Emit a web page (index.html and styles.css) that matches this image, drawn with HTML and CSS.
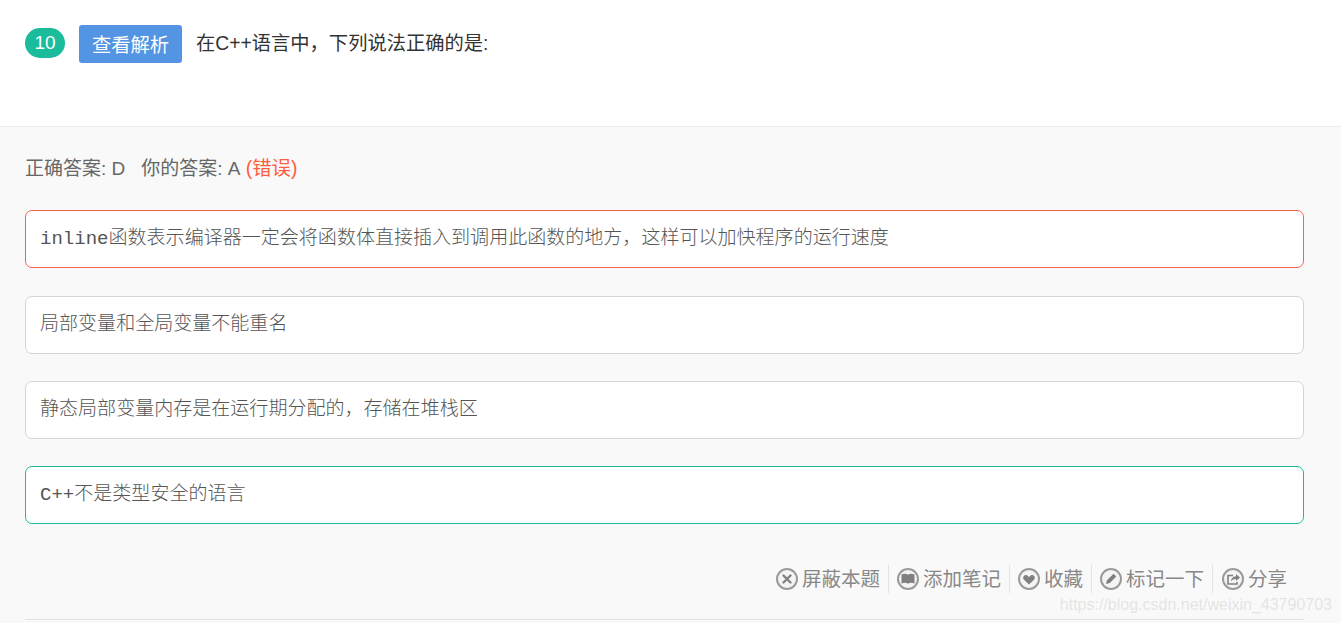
FILE: index.html
```html
<!DOCTYPE html>
<html lang="zh-CN">
<head>
<meta charset="utf-8">
<title>题目解析</title>
<link rel="stylesheet" href="styles.css">
</head>
<body>
<header class="question">
  <span class="num">10</span>
  <a class="analysis-btn">查看解析</a>
  <p class="title">在C++语言中，下列说法正确的是:</p>
</header>
<main class="answer-area">
  <p class="result">正确答案: D<span class="yours">你的答案: A</span> <span class="wrong">(错误)</span></p>
  <ul class="options">
    <li class="option option-wrong">inline函数表示编译器一定会将函数体直接插入到调用此函数的地方，这样可以加快程序的运行速度</li>
    <li class="option">局部变量和全局变量不能重名</li>
    <li class="option">静态局部变量内存是在运行期分配的，存储在堆栈区</li>
    <li class="option option-right">C++不是类型安全的语言</li>
  </ul>
  <div class="actions">
    <a class="action">
      <svg class="icon" viewBox="0 0 22 22"><circle cx="11" cy="11" r="10" class="ring"/><path d="M7.500 7.500l7 7M14.500 7.500l-7 7" class="x"/></svg>屏蔽本题</a>
    <a class="action">
      <svg class="icon" viewBox="0 0 22 22"><circle cx="11" cy="11" r="10" class="ring"/><path d="M4.500 6.500c2.500-1 5-1 6.500.3 1.500-1.300 4-1.300 6.500-.3v9c-2.500-1-5-1-6.500.2-1.500-1.200-4-1.200-6.500-.2z" class="solid"/></svg>添加笔记</a>
    <a class="action">
      <svg class="icon" viewBox="0 0 22 22"><circle cx="11" cy="11" r="10" class="ring"/><path d="M11 16.500l-5-4.700c-2.300-2.500.9-6 3.300-4.200L11 9l1.700-1.400c2.400-1.800 5.600 1.700 3.300 4.200z" class="solid"/></svg>收藏</a>
    <a class="action">
      <svg class="icon" viewBox="0 0 22 22"><circle cx="11" cy="11" r="10" class="ring"/><path d="M6 16l1-3.800 6.500-6.500 2.800 2.800-6.500 6.500z" class="solid"/></svg>标记一下</a>
    <a class="action">
      <svg class="icon" viewBox="0 0 22 22"><circle cx="11" cy="11" r="10" class="ring"/><path d="M14 6l4 3.500-4 3.500v-2c-2.500 0-4 .8-5 2.500 0-3 1.800-5 5-5.300z" class="solid"/><path d="M11 7.500H6v8.500h9v-2" class="line"/></svg>分享</a>
  </div>
  <div class="divider"></div>
</main>
<span class="watermark">https://blog.csdn.net/weixin_43790703</span>
</body>
</html>
```
FILE: styles.css
```css
* { box-sizing: border-box; }
html, body { margin: 0; height: 623px; overflow: hidden; }
body {
  position: relative;
  font-family: "Liberation Sans", "Noto Sans CJK SC", sans-serif;
  font-size: 19px;
  color: #666;
  background: #f9f9f9;
}
.question {
  height: 127px;
  background: #fff;
  border-bottom: 1px solid #ececec;
  padding: 25px 25px 0;
  display: flex;
  align-items: flex-start;
}
.num {
  width: 40px;
  height: 30px;
  margin-top: 3px;
  border-radius: 15px;
  background: #1abc9c;
  color: #fff;
  font-size: 19px;
  line-height: 30px;
  text-align: center;
}
.analysis-btn {
  width: 103px;
  height: 38px;
  margin-left: 14px;
  padding-top: 2px;
  border-radius: 3px;
  background: #5495e3;
  color: #fff;
  font-size: 19.300px;
  line-height: 38px;
  text-align: center;
}
.title {
  margin: 0 0 0 14px;
  color: #333;
  font-size: 19.300px;
  line-height: 37px;
}
.answer-area { padding: 27px 37px 0 25px; }
.result {
  margin: 0;
  height: 30px;
  line-height: 28px;
  color: #666;
}
.yours { margin-left: 16px; }
.wrong { margin-left: 1px; color: #ff5c41; font-size: 19.400px; }
.options {
  list-style: none;
  margin: 26px 0 0;
  padding: 0;
  display: flex;
  flex-direction: column;
  gap: 27px;
}
.option {
  height: 58px;
  padding: 0 14px;
  background: #fff;
  border: 1px solid #d5d5d5;
  border-radius: 7px;
  font-family: "Liberation Mono", "Noto Sans CJK SC", monospace;
  font-size: 19.050px;
  font-weight: 300;
  line-height: 56px;
  color: #555;
}
.option:nth-child(2) { margin-top: 1px; }
.option-wrong { border-color: #f4634c; }
.option-right { border-color: #1abc9c; }
.actions {
  display: flex;
  justify-content: flex-end;
  margin-top: 41px;
  padding-right: 9px;
  height: 28px;
}
.action {
  display: flex;
  align-items: center;
  gap: 4px;
  padding: 0 8px;
  border-left: 1px solid #e2e2e2;
  color: #888;
  font-size: 19.500px;
  line-height: 28px;
}
.action:first-child { border-left: 0; }
.action:last-child { padding-left: 9px; }
.icon { width: 22px; height: 22px; flex: none; }
.ring { fill: #f4f4f4; stroke: #9a9a9a; stroke-width: 2; }
.x { fill: none; stroke: #808080; stroke-width: 2.400; stroke-linecap: round; }
.solid { fill: #808080; }
.line { fill: none; stroke: #808080; stroke-width: 1.600; }
.divider {
  margin-top: 26px;
  height: 1px;
  background: #e2e2e2;
}
.watermark {
  position: absolute;
  right: 9px;
  top: 594px;
  font-size: 16px;
  line-height: 22px;
  color: rgba(170, 170, 170, 0.28);
}
```
